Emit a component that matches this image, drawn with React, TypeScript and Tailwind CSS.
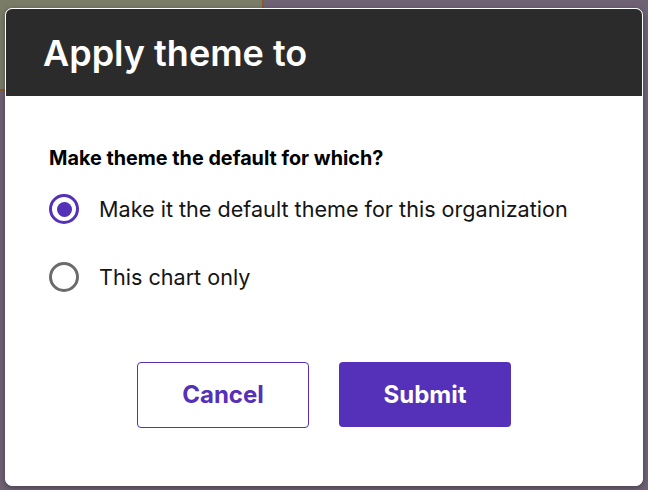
import React, { useState } from "react";

const options = [
  { id: "org", label: "Make it the default theme for this organization" },
  { id: "chart", label: "This chart only" },
];

export default function App() {
  const [selected, setSelected] = useState("org");

  return (
    <div
      className="relative w-[648px] h-[490px] overflow-hidden bg-[#6f6275]"
      style={{ fontFamily: "Inter, 'Noto Sans', sans-serif" }}
    >
      {/* Backdrop content */}
      <div className="flex h-[89px]">
        <div className="w-[262px] bg-[#7a7c68]" />
        <div className="w-[2px] bg-[#8a5a2c]" />
        <div className="flex-1 bg-[#6f6275]" />
      </div>
      <div className="h-[2px] w-[262px] bg-[#8a5a2c]" />

      {/* Dialog */}
      <div className="absolute left-[5px] top-[8px] w-[638px] h-[478px] rounded-[7px] bg-white border border-white overflow-hidden shadow-[0_2px_6px_rgba(0,0,0,0.35)] flex flex-col">
        <div className="h-[87px] bg-[#2b2b2b] flex items-center px-[37px]">
          <h1 className="text-white text-[36px] font-semibold leading-none">
            Apply theme to
          </h1>
        </div>

        <div className="flex flex-col px-[43px] pt-[50px]">
          <h2 className="text-[19.8px] leading-[24px] font-bold text-black">
            Make theme the default for which?
          </h2>

          <div className="mt-[24px] flex flex-col gap-[38px]">
            {options.map((opt) => {
              const on = selected === opt.id;
              return (
                <label
                  key={opt.id}
                  className="flex items-center gap-[20px] cursor-pointer"
                  onClick={() => setSelected(opt.id)}
                >
                  <span
                    className={`w-[30px] h-[30px] shrink-0 rounded-full border-[3px] flex items-center justify-center ${
                      on ? "border-[#5530b8]" : "border-[#6b6b6b]"
                    }`}
                  >
                    {on && <span className="w-[15px] h-[15px] rounded-full bg-[#5530b8]" />}
                  </span>
                  <span className="text-[21.6px] leading-[30px] text-[#141414]">{opt.label}</span>
                </label>
              );
            })}
          </div>

          <div className="mt-[70px] flex justify-center gap-[30px]">
            <button className="w-[172px] h-[66px] rounded-[4px] border border-[#5530b8] bg-white text-[#5530b8] text-[24px] font-bold">
              Cancel
            </button>
            <button className="w-[172px] h-[65px] rounded-[4px] bg-[#5530b8] text-white text-[24px] font-bold">
              Submit
            </button>
          </div>
        </div>
      </div>
    </div>
  );
}
